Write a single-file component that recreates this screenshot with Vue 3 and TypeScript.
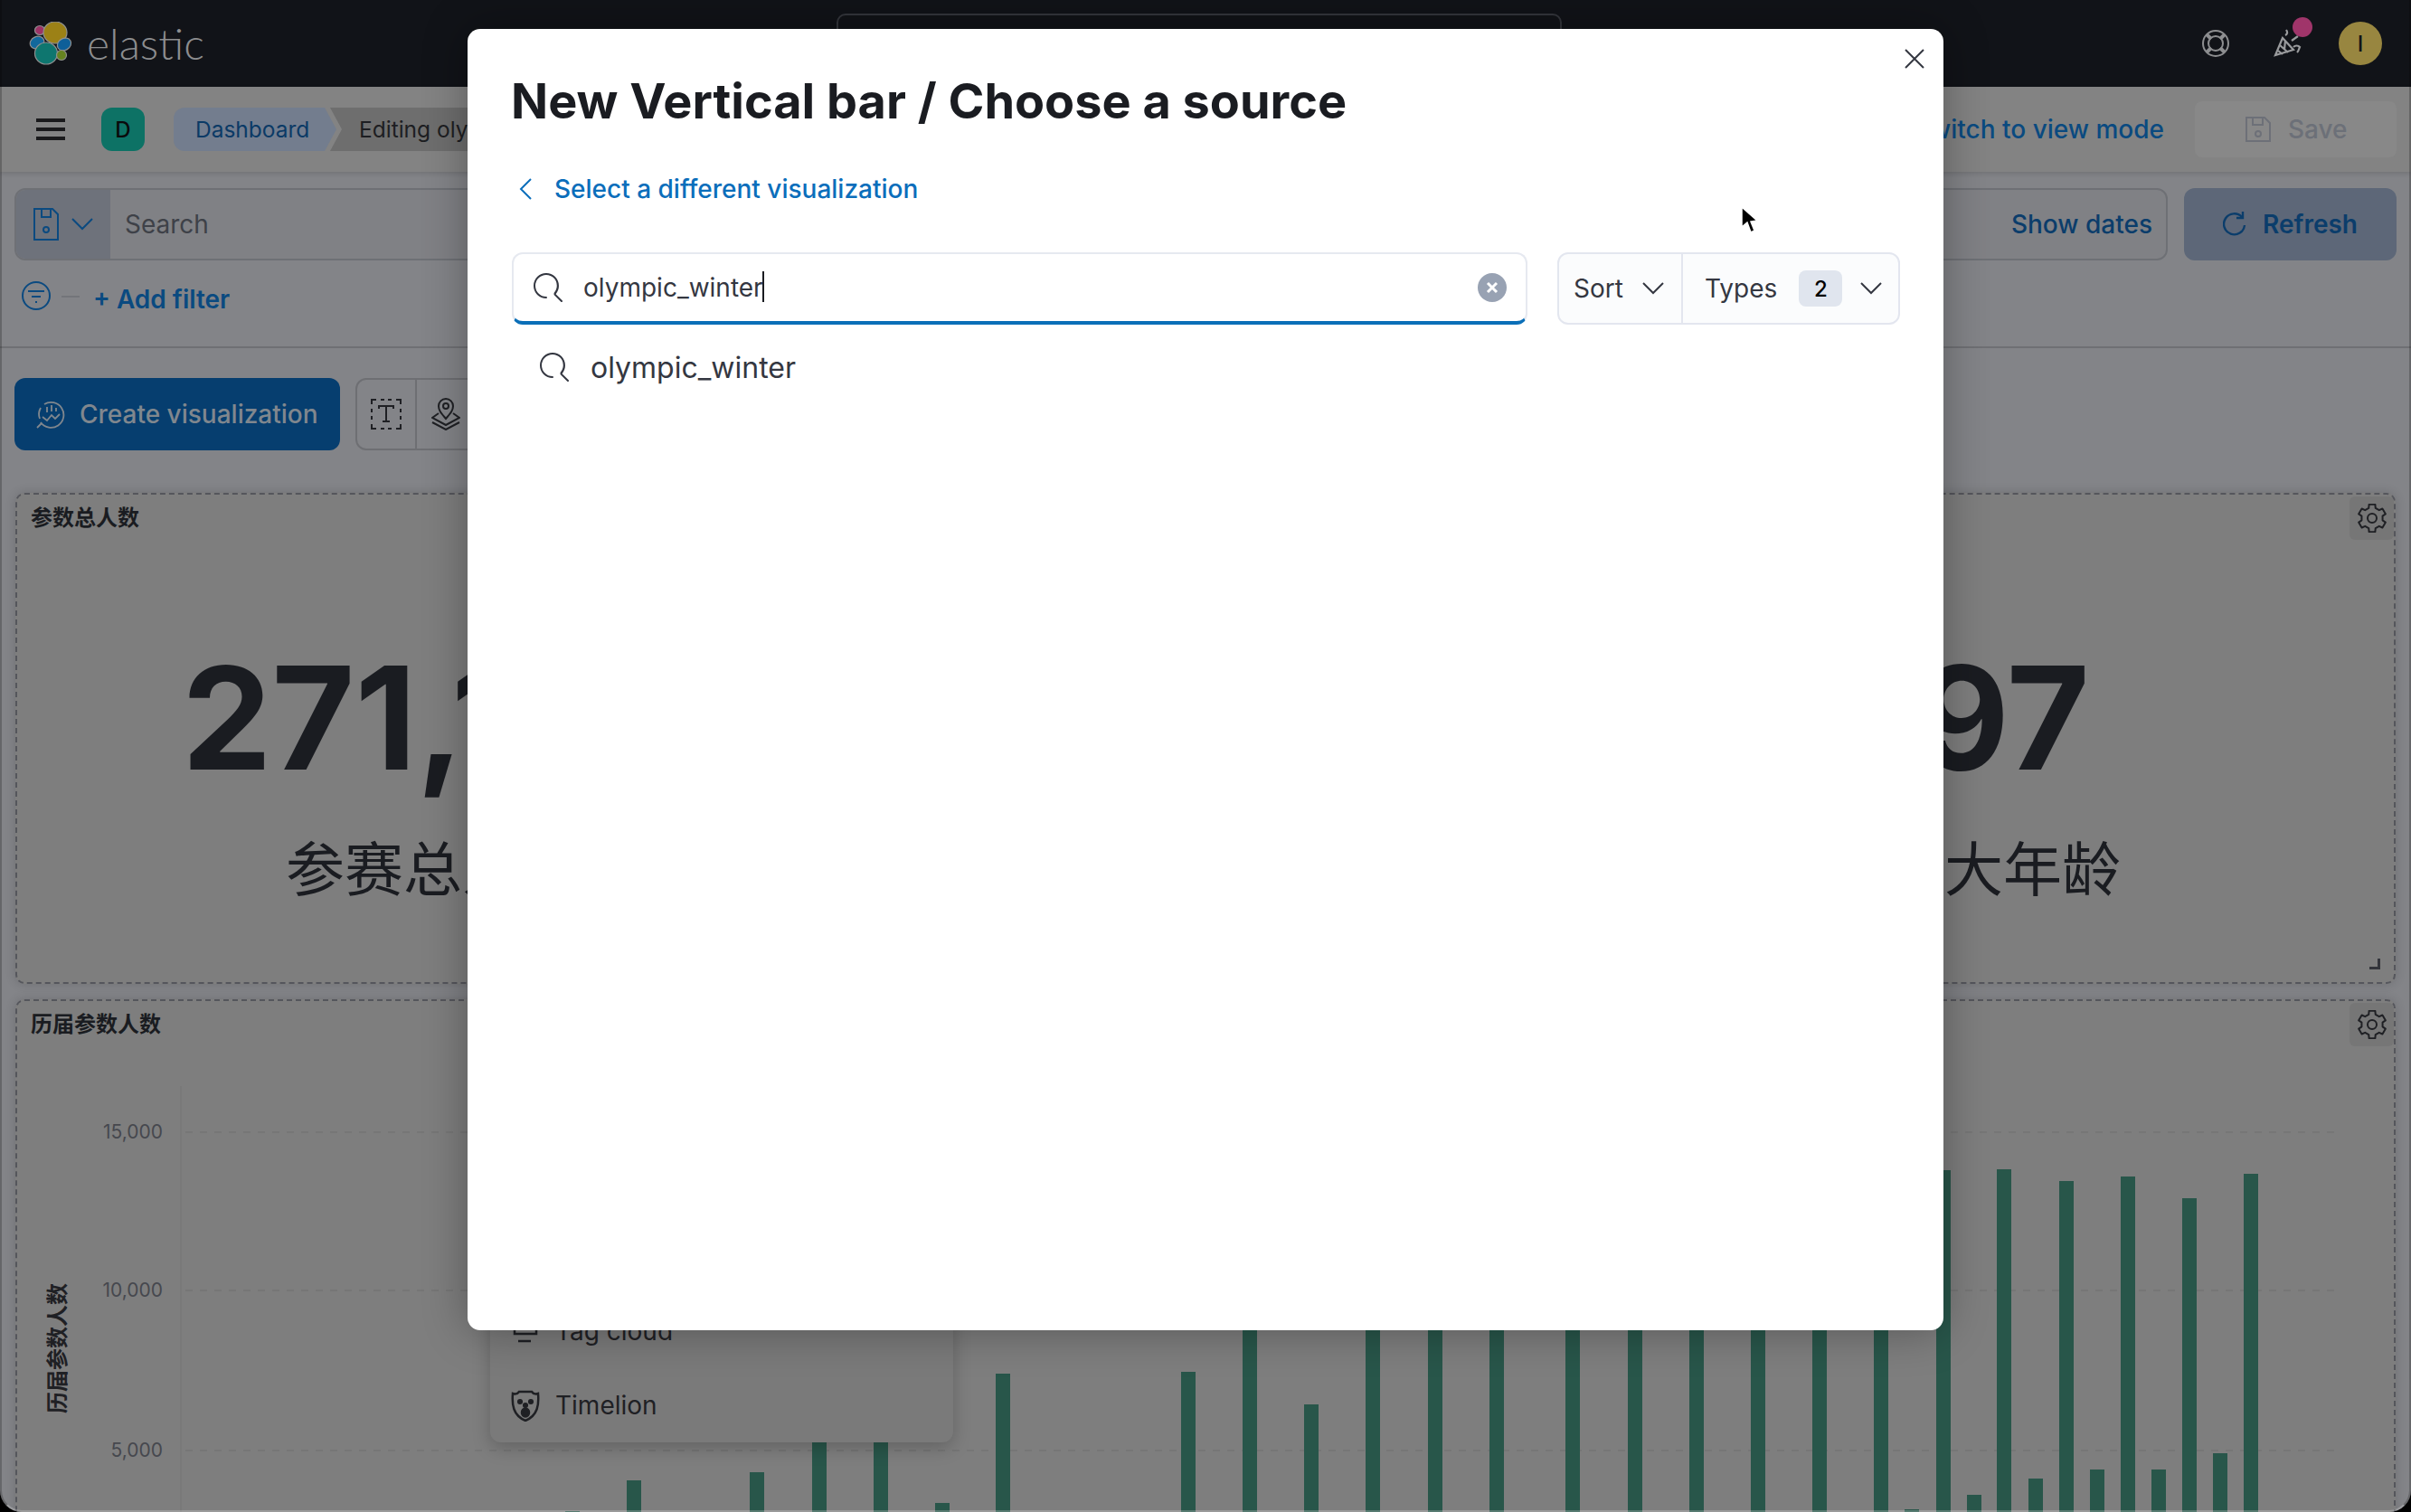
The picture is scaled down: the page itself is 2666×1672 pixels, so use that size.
<script setup lang="ts">
interface Bar { x: number; top: number }

const bars: Bar[] = [
  [625, 1671], [693, 1637], [829, 1628], [898, 1500], [966, 1500], [1034, 1662], [1101, 1519],
  [1306, 1517], [1374, 1400], [1442, 1553], [1510, 1400], [1579, 1400], [1647, 1400], [1731, 1400],
  [1800, 1400], [1868, 1400], [1936, 1400], [2004, 1400], [2072, 1400], [2106, 1669], [2141, 1294],
  [2175, 1653], [2208, 1293], [2243, 1635], [2277, 1306], [2311, 1625], [2345, 1301], [2379, 1625],
  [2413, 1325], [2447, 1607], [2481, 1298],
].map(([x, top]) => ({ x, top }))

const gridLines = [
  { y: 1252, label: '15,000' },
  { y: 1427, label: '10,000' },
  { y: 1604, label: '5,000' },
]

function gearPath(): string {
  const pts: string[] = []
  const teeth = 6
  for (let i = 0; i < teeth; i++) {
    const a = (i / teeth) * Math.PI * 2 - Math.PI / 2
    const step = Math.PI / teeth
    const list: [number, number][] = [
      [a - step * 0.42, 15.5],
      [a + step * 0.42, 15.5],
      [a + step * 0.62, 11.8],
      [a + step * 1.38, 11.8],
    ]
    for (const [an, r] of list) {
      pts.push(`${(16 + Math.cos(an) * r).toFixed(2)} ${(16 + Math.sin(an) * r).toFixed(2)}`)
    }
  }
  return 'M' + pts.join('L') + 'Z'
}
const gear = gearPath()

const searchIcon =
  'M11.271 11.978l3.872 3.873a.502.502 0 00.708 0 .502.502 0 000-.708l-3.565-3.564c2.38-2.747 2.267-6.923-.342-9.532-2.73-2.73-7.17-2.73-9.898 0-2.728 2.729-2.728 7.17 0 9.898a6.955 6.955 0 004.949 2.05.5.5 0 000-1 5.96 5.96 0 01-4.242-1.757 6.01 6.01 0 010-8.486c2.339-2.34 6.146-2.34 8.485 0a6.004 6.004 0 01.033 8.22z'
</script>

<template>
  <div class="app">
    <header class="top">
      <div class="brand">
        <svg class="logo" width="48" height="48" viewBox="0 0 48 48">
          <g stroke="#8f9090" stroke-width="1.2">
            <ellipse cx="12" cy="9.500" rx="5.500" ry="5" fill="#9c3366" />
            <ellipse cx="29" cy="12" rx="13" ry="12" fill="#9c8116" />
            <ellipse cx="9" cy="23" rx="8" ry="6.500" fill="#12689c" transform="rotate(-25 9 23)" />
            <ellipse cx="39" cy="25" rx="8" ry="6.500" fill="#0e5f99" transform="rotate(-30 39 25)" />
            <ellipse cx="19" cy="35" rx="12.500" ry="12" fill="#0e766f" />
            <ellipse cx="36" cy="37" rx="5.500" ry="5.500" fill="#668320" />
          </g>
        </svg>
        <span class="wordmark">elastic</span>
      </div>
      <div class="global-search"></div>
      <div class="top-actions">
        <svg class="ta-help" width="32" height="32" viewBox="0 0 32 32" fill="none" stroke="#8d8e90" stroke-width="2">
          <circle cx="16" cy="16" r="14" />
          <circle cx="16" cy="16" r="8" />
          <path d="M6 6l5 5M26 6l-5 5M6 26l5-5M26 26l-5-5" stroke-width="4" />
        </svg>
        <span class="party">
          <svg width="32" height="32" viewBox="0 0 32 32" fill="none" stroke="#9a9b9d" stroke-width="2.200">
            <path d="M10 10L2 29l20-6z" />
            <path d="M7 18l9 8M5 24l5 4M13 13l-1 10" />
            <path d="M13 7c2-1 3-3 1-6M20 13l7-5M22 20c2-2 5-2 7 0-1 2-1 4-3 6" />
          </svg>
          <i class="dot"></i>
        </span>
        <span class="avatar">I</span>
      </div>
    </header>

    <nav class="crumbs-row">
      <span class="burger"><i></i><i></i><i></i></span>
      <span class="space-tile">D</span>
      <span class="crumb crumb-first">Dashboard</span>
      <span class="crumb crumb-second">Editing olympic_winter</span>
      <div class="nav-actions">
        <span class="nav-link">Switch to view mode</span>
        <span class="save-btn">
          <svg width="28" height="28" viewBox="0 0 28 28" fill="none" stroke="#6d7078" stroke-width="2">
            <path d="M1 1h20l6 6v20H1z" />
            <path d="M8 1v8h11V1" />
            <circle cx="14" cy="19" r="3" />
          </svg>
          Save
        </span>
      </div>
    </nav>

    <section class="query">
      <div class="query-top">
        <div class="querybar">
          <div class="prepend">
            <svg width="28" height="36" viewBox="0 0 28 36" fill="none" stroke="#0b4a80" stroke-width="2">
              <path d="M1 1h20l6 6v28H1z" />
              <path d="M9 1v9h10V1" />
              <circle cx="14" cy="24" r="3" />
            </svg>
            <svg width="24" height="14" viewBox="0 0 24 14" fill="none" stroke="#0b4a80" stroke-width="2">
              <path d="M1 1l11 11L23 1" />
            </svg>
          </div>
          <span class="placeholder">Search</span>
          <span class="show-dates">Show dates</span>
        </div>
        <button class="refresh">
          <svg width="26" height="30" viewBox="0 0 26 30" fill="none" stroke="#0b3d6b" stroke-width="2.400">
            <path d="M21 7a11.500 11.500 0 1 0 3 9" />
            <path d="M22 1v7h-7" />
          </svg>
          Refresh
        </button>
      </div>
      <div class="filters">
        <svg width="32" height="32" viewBox="0 0 32 32" fill="none" stroke="#0b4a80" stroke-width="2">
          <circle cx="16" cy="16" r="15" />
          <path d="M7 11h18M11 17h10M15 23h2" />
        </svg>
        <i class="filter-dash"></i>
        <span class="add-filter">+ Add filter</span>
      </div>
    </section>

    <section class="toolbar">
      <button class="create">
        <svg width="32" height="32" viewBox="0 0 32 32" fill="none" stroke="#80878e" stroke-width="1.800">
          <path d="M9 5a14 14 0 1 1-4 20" />
          <path d="M5 9a14 14 0 0 0-1 12M1 31l5-5" />
          <path d="M7 19l5 4 5-6 4 4 5-5M12 8v6M17 6v7M22 9v4" />
        </svg>
        Create visualization
      </button>
      <div class="tool-group">
        <span class="tool">
          <svg width="34" height="34" viewBox="0 0 34 34" fill="none" stroke="#1f2024" stroke-width="2">
            <path d="M1 6V1h5M11 1h4M19 1h4M28 1h5v5M33 11v4M33 19v4M33 28v5h-5M23 33h-4M15 33h-4M6 33H1v-5M1 23v-4M1 15v-4" />
            <path d="M9 11V8h16v3M17 8v17M13 25h8" />
          </svg>
        </span>
        <span class="tool">
          <svg width="32" height="36" viewBox="0 0 32 36" fill="none" stroke="#1f2024" stroke-width="2">
            <path d="M16 23C11 17 8 14 8 9a8 8 0 0 1 16 0c0 5-3 8-8 14z" />
            <circle cx="16" cy="9" r="3" />
            <path d="M8 17l-7 5 15 8 15-8-7-5M1 27l15 8 15-8" />
          </svg>
        </span>
        <span class="tool"></span>
      </div>
    </section>

    <main class="panels">
      <article class="panel panel-metrics">
        <h3 class="panel-title">参数总人数</h3>
        <span class="gear-box">
          <svg width="32" height="32" viewBox="0 0 32 32" fill="none" stroke="#1f2024" stroke-width="2">
            <path :d="gear" stroke-linejoin="round" />
            <circle cx="16" cy="16" r="5" />
          </svg>
        </span>
        <div class="metrics">
          <div class="metric">
            <strong class="metric-wide">271,116</strong>
            <span>参赛总人数</span>
          </div>
          <div class="metric">
            <strong>97</strong>
            <span>最大年龄</span>
          </div>
        </div>
        <svg class="resize" width="12" height="12" viewBox="0 0 12 12" fill="#33353b">
          <path d="M9 0h3v12H0V9h9z" />
        </svg>
      </article>

      <article class="panel panel-chart">
        <h3 class="panel-title">历届参数人数</h3>
        <span class="gear-box">
          <svg width="32" height="32" viewBox="0 0 32 32" fill="none" stroke="#1f2024" stroke-width="2">
            <path :d="gear" stroke-linejoin="round" />
            <circle cx="16" cy="16" r="5" />
          </svg>
        </span>
        <svg class="chart" width="2632" height="500" viewBox="17 1172 2632 500">
          <line x1="200" y1="1201" x2="200" y2="1672" stroke="#757575" stroke-width="1" />
          <g v-for="g in gridLines" :key="g.y">
            <line x1="205" :y1="g.y" x2="2587" :y2="g.y" stroke="#767676" stroke-width="2" stroke-dasharray="8 8" />
            <text class="tick" x="180" :y="g.y + 7" text-anchor="end">{{ g.label }}</text>
          </g>
          <rect v-for="b in bars" :key="b.x" :x="b.x" :y="b.top" width="16" :height="1672 - b.top" fill="#28564a" />
          <text class="y-title" transform="translate(72 1491) rotate(-90)" text-anchor="middle">历届参数人数</text>
        </svg>
      </article>
    </main>

    <div class="viz-menu">
      <div class="viz-item">
        <svg width="32" height="32" viewBox="0 0 32 32" fill="none" stroke="#1f2024" stroke-width="2.500">
          <path d="M2 5h28M4 13h24v6H4zM8 27h14" />
        </svg>
        Tag cloud
      </div>
      <div class="viz-item">
        <svg width="32" height="36" viewBox="0 0 32 36" fill="none" stroke="#1f2024" stroke-width="2.500">
          <path d="M2 5c3 1 5 1 7-2h14c2 3 4 3 7 2 1 12 0 24-14 30C2 29 1 17 2 5z" />
          <circle cx="10" cy="14" r="1.800" fill="#1f2024" />
          <circle cx="22" cy="14" r="1.800" fill="#1f2024" />
          <circle cx="16" cy="18" r="1.800" fill="#1f2024" />
          <ellipse cx="16" cy="26" rx="4" ry="4.500" fill="#1f2024" />
        </svg>
        Timelion
      </div>
    </div>

    <div class="modal" role="dialog">
      <svg class="close" width="22" height="22" viewBox="0 0 22 22" fill="none" stroke="#343741" stroke-width="2">
        <path d="M1 1l20 20M21 1L1 21" />
      </svg>
      <h1 class="modal-title">New Vertical bar / Choose a source</h1>
      <a class="back">
        <svg width="14" height="24" viewBox="0 0 14 24" fill="none" stroke="#0b6ebb" stroke-width="2">
          <path d="M13 1L2 12l11 11" />
        </svg>
        Select a different visualization
      </a>
      <div class="finder">
        <div class="finder-input">
          <svg width="32" height="32" viewBox="0 0 16 16" fill="#343741"><path :d="searchIcon" /></svg>
          <span class="value">olympic_winter<i class="caret"></i></span>
          <span class="clear">
            <svg width="14" height="14" viewBox="0 0 14 14" fill="none" stroke="#fff" stroke-width="3">
              <path d="M2 2l10 10M12 2L2 12" />
            </svg>
          </span>
        </div>
        <div class="finder-filters">
          <span class="ff ff-sort">
            Sort
            <svg width="24" height="14" viewBox="0 0 24 14" fill="none" stroke="#343741" stroke-width="2"><path d="M1 1l11 11L23 1" /></svg>
          </span>
          <span class="ff ff-types">
            Types
            <b class="badge">2</b>
            <svg width="24" height="14" viewBox="0 0 24 14" fill="none" stroke="#343741" stroke-width="2"><path d="M1 1l11 11L23 1" /></svg>
          </span>
        </div>
      </div>
      <div class="suggestion">
        <svg width="32" height="32" viewBox="0 0 16 16" fill="#343741"><path :d="searchIcon" /></svg>
        olympic_winter
      </div>
    </div>

    <svg class="cursor" width="20" height="32" viewBox="0 0 20 32">
      <path d="M2 1l0 22 6-5 4 11 4-2-4-10 7-1z" fill="#000" stroke="#fff" stroke-width="1.500" />
    </svg>
  </div>
</template>

<style>
html, body { margin: 0; background: #000; }
</style>

<style scoped>
.app {
  position: relative;
  width: 2666px;
  height: 1672px;
  overflow: hidden;
  background: #838488;
  border-radius: 0 0 24px 24px;
  font-family: Inter, "Noto Sans CJK SC", sans-serif;
  font-size: 28px;
  color: #1a1c21;
}
.app::after {
  content: "";
  position: absolute;
  inset: 0;
  border-left: 2px solid rgba(0, 0, 0, 0.22);
  border-right: 2px solid rgba(0, 0, 0, 0.22);
  border-bottom: 2px solid rgba(255, 255, 255, 0.22);
  border-radius: 0 0 24px 24px;
  pointer-events: none;
  z-index: 5;
}
.top {
  height: 96px;
  display: grid;
  grid-template-columns: 925px 802px 1fr;
  background: #111318;
}
.brand {
  display: flex;
  align-items: center;
  gap: 16px;
  padding-left: 32px;
  height: 96px;
}
.wordmark {
  font-family: Lato, sans-serif;
  font-weight: 300;
  font-size: 48px;
  color: #8c8d8f;
  line-height: 1;
}
.global-search {
  margin-top: 15px;
  height: 66px;
  border: 2px solid #34363c;
  border-radius: 10px;
  box-sizing: border-box;
}
.top-actions {
  display: flex;
  align-items: center;
  justify-content: flex-end;
  padding-right: 32px;
  gap: 48px;
}
.party { position: relative; display: flex; }
.dot {
  position: absolute;
  right: -11px;
  top: -13px;
  width: 22px;
  height: 22px;
  border-radius: 50%;
  background: #a0356a;
}
.avatar {
  width: 48px;
  height: 48px;
  margin-left: -8px;
  border-radius: 50%;
  background: #988640;
  color: #111318;
  display: flex;
  align-items: center;
  justify-content: center;
  font-size: 24px;
  font-weight: 500;
}
.crumbs-row {
  height: 94px;
  box-sizing: border-box;
  display: flex;
  align-items: center;
  padding: 0 16px 0 40px;
  background: #838383;
  box-shadow: 0 2px 5px rgba(0, 0, 0, 0.14);
  position: relative;
}
.burger {
  width: 32px;
  height: 24px;
  display: flex;
  flex-direction: column;
  justify-content: space-between;
  margin-right: 40px;
}
.burger i { display: block; height: 4px; background: #1a1a1c; }
.space-tile {
  width: 48px;
  height: 48px;
  border-radius: 12px;
  background: #0d7265;
  color: #0a0a0c;
  font-weight: 500;
  font-size: 24px;
  display: flex;
  align-items: center;
  justify-content: center;
  margin-right: 32px;
}
.crumb {
  height: 48px;
  display: flex;
  align-items: center;
  font-size: 24.500px;
  white-space: nowrap;
}
.crumb-first {
  position: relative;
  z-index: 1;
  width: 173px;
  box-sizing: border-box;
  padding-left: 24px;
  color: #0b3a66;
}
.crumb-first::before {
  content: "";
  position: absolute;
  inset: 0 -7px 0 0;
  z-index: -1;
  background: #737d8e;
  border-radius: 12px 0 0 12px;
  clip-path: polygon(0 0, 167px 0, 180px 50%, 167px 100%, 0 100%);
}
.crumb-second {
  padding-left: 32px;
  padding-right: 40px;
  background: #6e6e6e;
  color: #1d1e22;
  clip-path: polygon(0 0, 100% 0, 100% 100%, 0 100%, 13px 50%);
}
.nav-actions {
  margin-left: auto;
  display: flex;
  align-items: center;
  gap: 34px;
}
.nav-link { color: #0a4a80; font-weight: 500; }
.save-btn {
  width: 223px;
  height: 62px;
  box-sizing: border-box;
  padding-left: 56px;
  background: #888888;
  border-radius: 8px;
  display: flex;
  align-items: center;
  gap: 19px;
  color: #6c7078;
  font-weight: 500;
}
.query {
  height: 195px;
  box-sizing: border-box;
  padding: 18px 16px 0;
  border-bottom: 2px solid #6f7074;
}
.query-top { display: flex; gap: 18px; }
.querybar {
  width: 2381px;
  height: 80px;
  box-sizing: border-box;
  border: 2px solid #6e7075;
  border-radius: 12px;
  background: #808185;
  display: flex;
  align-items: center;
  overflow: hidden;
  padding-right: 15px;
}
.prepend {
  width: 104px;
  height: 100%;
  flex-shrink: 0;
  background: #6e727b;
  display: flex;
  align-items: center;
  justify-content: center;
  gap: 14px;
}
.placeholder { margin-left: 16px; color: #3e4148; }
.show-dates { margin-left: auto; color: #0b3d6b; font-weight: 500; }
.refresh {
  width: 235px;
  height: 80px;
  border: 0;
  border-radius: 12px;
  background: #5d6778;
  color: #0b3d6b;
  font: inherit;
  font-weight: 600;
  display: flex;
  align-items: center;
  justify-content: center;
  gap: 18px;
}
.filters {
  display: flex;
  align-items: flex-start;
  margin: 23px 0 0 8px;
}
.filter-dash { width: 20px; height: 2px; background: #73757a; margin: 16px 15px 0 12px; }
.add-filter { color: #0a4a80; font-weight: 600; line-height: 40px; }
.toolbar {
  display: flex;
  gap: 17px;
  padding: 33px 16px 0;
  height: 160px;
  box-sizing: border-box;
  align-items: flex-start;
}
.create {
  width: 360px;
  height: 80px;
  border: 0;
  border-radius: 12px;
  background: #063e6f;
  color: #80878e;
  font: inherit;
  font-weight: 500;
  display: flex;
  align-items: center;
  gap: 16px;
  padding: 0 0 0 24px;
}
.tool-group {
  display: flex;
  height: 80px;
  box-sizing: border-box;
  border: 2px solid #6e6f73;
  border-radius: 12px;
}
.tool {
  width: 64px;
  display: flex;
  align-items: center;
  justify-content: center;
  border-right: 2px solid #6e6f73;
}
.panels {
  padding: 0 17px;
  display: flex;
  flex-direction: column;
  gap: 17px;
}
.panel {
  position: relative;
  box-sizing: border-box;
  border: 2px dashed #55565c;
  border-radius: 10px;
  background: #7e7e7e;
  box-shadow: 0 0 12px rgba(0, 0, 0, 0.16);
}
.panel-metrics { height: 543px; }
.panel-chart { height: 600px; }
.panel-title {
  margin: 0;
  padding: 8px 15px 0;
  height: 62px;
  box-sizing: border-box;
  font-size: 24px;
  line-height: 36px;
  font-weight: 700;
}
.gear-box {
  position: absolute;
  right: 0;
  top: 2px;
  width: 49px;
  height: 48px;
  background: #767676;
  border-radius: 6px;
  display: flex;
  align-items: center;
  justify-content: center;
}
.metrics {
  display: flex;
  justify-content: space-between;
  padding: 90px 302px 0 182px;
}
.metric {
  display: flex;
  flex-direction: column;
  align-items: center;
}
.metric strong {
  font-size: 158px;
  line-height: 190px;
  font-weight: 700;
}
.metric .metric-wide { margin-right: 18px; }
.metric span {
  font-size: 65px;
  line-height: 90px;
  margin-top: 28px;
}
.resize { position: absolute; right: 15px; bottom: 14px; }
.chart { display: block; margin: 3px 0 0 -2px; }
.tick { font-size: 21px; fill: #46484e; font-family: Inter, sans-serif; }
.y-title { font-size: 24px; font-weight: 700; fill: #1f2024; font-family: "Noto Sans CJK SC", sans-serif; }
.viz-menu {
  position: absolute;
  left: 542px;
  top: 1100px;
  width: 512px;
  height: 495px;
  box-sizing: border-box;
  background: #7a7a7a;
  border-radius: 12px;
  box-shadow: 0 6px 20px rgba(0, 0, 0, 0.22);
  display: flex;
  flex-direction: column;
  justify-content: flex-end;
  padding: 0 23px 0;
}
.viz-item {
  height: 82px;
  display: flex;
  align-items: center;
  gap: 17px;
  color: #1f2024;
}
.modal {
  position: absolute;
  left: 517px;
  top: 32px;
  width: 1632px;
  height: 1439px;
  box-sizing: border-box;
  padding: 0 48px;
  background: #fff;
  border-radius: 14px;
  box-shadow: 0 0 50px rgba(0, 0, 0, 0.32);
  z-index: 3;
}
.close { position: absolute; right: 21px; top: 22px; }
.modal-title {
  margin: 0;
  padding-top: 40px;
  font-size: 54px;
  line-height: 80px;
  font-weight: 700;
  color: #1a1c21;
  white-space: nowrap;
}
.back {
  margin-top: 37px;
  height: 40px;
  display: flex;
  align-items: center;
  gap: 25px;
  padding-left: 9px;
  color: #0b6ebb;
  font-weight: 500;
}
.finder {
  display: flex;
  gap: 33px;
  margin-top: 50px;
  margin-left: 1px;
}
.finder-input {
  width: 1123px;
  height: 80px;
  box-sizing: border-box;
  border: 2px solid #e6e9f0;
  border-bottom: 4px solid #0b6fb8;
  border-radius: 12px;
  display: flex;
  align-items: center;
  padding: 0 21px 0 22px;
  gap: 23px;
  color: #343741;
}
.value { position: relative; display: flex; align-items: center; }
.caret {
  display: block;
  position: absolute;
  right: -1px;
  top: -1px;
  width: 2px;
  height: 34px;
  background: #1a1c21;
}
.clear {
  margin-left: auto;
  width: 32px;
  height: 32px;
  border-radius: 50%;
  background: #98a2b3;
  display: flex;
  align-items: center;
  justify-content: center;
}
.finder-filters {
  width: 379px;
  height: 80px;
  box-sizing: border-box;
  border: 2px solid #e3e6ef;
  border-radius: 12px;
  background: #fbfcfd;
  display: flex;
  color: #343741;
}
.ff { display: flex; align-items: center; height: 100%; box-sizing: border-box; }
.ff-sort {
  width: 137px;
  padding-left: 16px;
  gap: 21px;
  border-right: 2px solid #e3e6ef;
}
.ff-types { padding-left: 24px; }
.badge {
  width: 48px;
  height: 40px;
  margin: 0 20px 0 24px;
  border-radius: 8px;
  background: #e0e5ee;
  color: #000;
  font-weight: 500;
  font-size: 24px;
  display: flex;
  align-items: center;
  justify-content: center;
}
.suggestion {
  display: flex;
  align-items: center;
  gap: 24px;
  margin: 27px 0 0 32px;
  height: 40px;
  font-size: 32px;
  color: #343741;
}
.cursor { position: absolute; left: 1924px; top: 228px; z-index: 4; }
</style>
